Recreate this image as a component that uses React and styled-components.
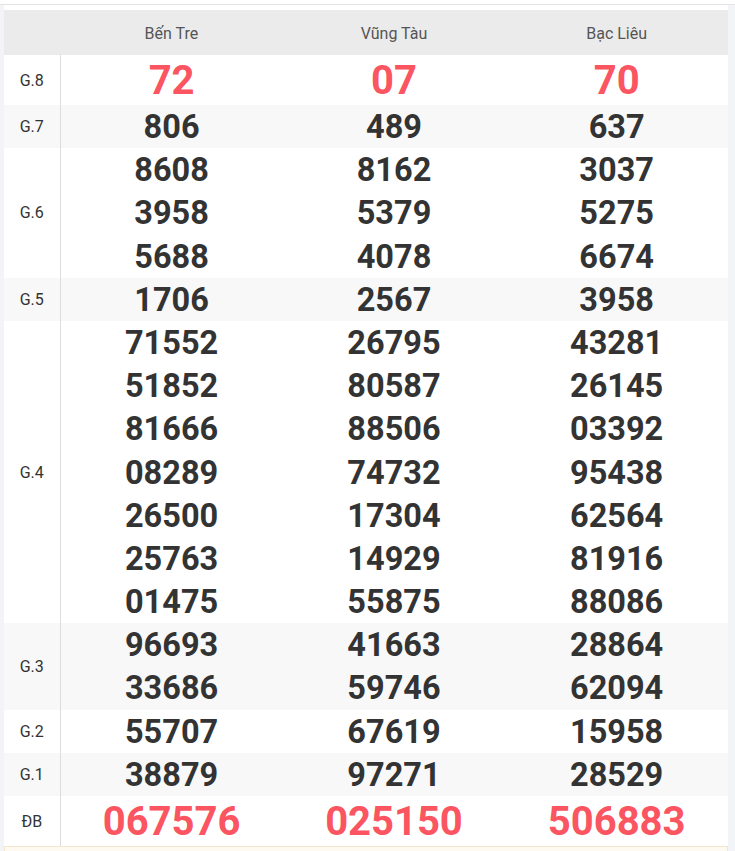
import React from 'react';
import styled, { createGlobalStyle } from 'styled-components';

const GlobalStyle = createGlobalStyle`
  html, body {
    margin: 0;
    padding: 0;
    background: #fff;
    font-family: Roboto, "Liberation Sans", Arial, sans-serif;
  }
`

const TopBar = styled.div`
  height: 4px;
  border-bottom: 1px solid #e4e4e4;
  background: #fff;
`

const Page = styled.div`
  background: #f3f4f8;
  padding: 0 7px 0 4px;
`

const Card = styled.div`
  background: #fff;
  padding-top: 5px;
`

const Table = styled.table`
  width: 100%;
  border-collapse: collapse;
  table-layout: fixed;
`

const HeadCell = styled.th`
  height: 44px;
  padding: 1px 0 0;
  background: #ebebeb;
  color: #555;
  font-size: 16px;
  font-weight: 400;
  text-align: center;
  width: ${(p) => (p.$label ? '56px' : 'auto')};
`

const Row = styled.tr`
  background: ${(p) => (p.$odd ? '#f8f8f8' : '#fff')};
`

const Label = styled.td`
  padding: 0;
  width: 56px;
  border-right: 1px solid #dddddd;
  color: #333;
  font-size: 16px;
  text-align: center;
  vertical-align: middle;
`

const NumCell = styled.td`
  padding: 0;
  text-align: center;
  vertical-align: middle;
`

const Num = styled.div`
  box-sizing: border-box;
  padding-top: 1px;
  height: ${(p) => (p.$big ? '50px' : '43.2px')};
  line-height: ${(p) => (p.$big ? '50px' : '43.2px')};
  font-size: ${(p) => (p.$big ? '40px' : '32.5px')};
  font-weight: 700;
  color: ${(p) => (p.$big ? '#fa5560' : '#333')};
`

const Footer = styled.div`
  height: 10px;
  background: #fffaf1;
  border: 1px solid #f3e6cc;
`

const provinces = ['Bến Tre', 'Vũng Tàu', 'Bạc Liêu']

const prizes = [
  { name: 'G.8', big: true, values: [['72'], ['07'], ['70']] },
  { name: 'G.7', values: [['806'], ['489'], ['637']] },
  { name: 'G.6', values: [['8608', '3958', '5688'], ['8162', '5379', '4078'], ['3037', '5275', '6674']] },
  { name: 'G.5', values: [['1706'], ['2567'], ['3958']] },
  {
    name: 'G.4',
    values: [
      ['71552', '51852', '81666', '08289', '26500', '25763', '01475'],
      ['26795', '80587', '88506', '74732', '17304', '14929', '55875'],
      ['43281', '26145', '03392', '95438', '62564', '81916', '88086'],
    ],
  },
  { name: 'G.3', values: [['96693', '33686'], ['41663', '59746'], ['28864', '62094']] },
  { name: 'G.2', values: [['55707'], ['67619'], ['15958']] },
  { name: 'G.1', values: [['38879'], ['97271'], ['28529']] },
  { name: 'ĐB', big: true, values: [['067576'], ['025150'], ['506883']] },
]

const App = () => (
  <>
    <GlobalStyle />
    <TopBar />
    <Page>
      <Card>
        <Table>
          <thead>
            <tr>
              <HeadCell $label />
              {provinces.map((p) => <HeadCell key={p}>{p}</HeadCell>)}
            </tr>
          </thead>
          <tbody>
            {prizes.map((prize, i) => (
              <Row key={prize.name} $odd={i % 2 === 1}>
                <Label>{prize.name}</Label>
                {prize.values.map((col, j) => (
                  <NumCell key={j}>
                    {col.map((n, k) => <Num key={k} $big={prize.big}>{n}</Num>)}
                  </NumCell>
                ))}
              </Row>
            ))}
          </tbody>
        </Table>
        <Footer />
      </Card>
    </Page>
  </>
)

export default App;
